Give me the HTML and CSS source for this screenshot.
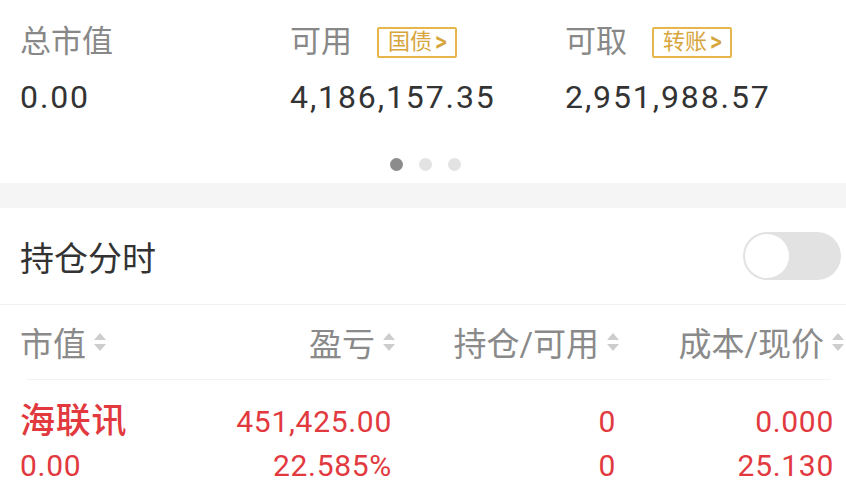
FILE: index.html
```html
<!DOCTYPE html>
<html lang="zh-CN">
<head>
    <meta charset="UTF-8">
    <title>持仓</title>
    <link rel="stylesheet" href="styles.css">
</head>
<body>
    <div class="summary">
        <div class="cell">
            <div class="label">总市值</div>
            <div class="num">0.00</div>
        </div>
        <div class="cell">
            <div class="label">可用 <span class="tag">国债<b>&gt;</b></span></div>
            <div class="num">4,186,157.35</div>
        </div>
        <div class="cell">
            <div class="label">可取 <span class="tag">转账<b>&gt;</b></span></div>
            <div class="num">2,951,988.57</div>
        </div>
    </div>
    <div class="dots">
        <span class="on"></span>
        <span></span>
        <span></span>
    </div>
    <div class="band"></div>
    <div class="switch-row">
        <span class="title">持仓分时</span>
        <span class="toggle"><i></i></span>
    </div>
    <div class="table">
        <div class="head">
            <div class="th left">市值<svg viewBox="0 0 12 20"><polygon points="6,1 12,8 0,8"/><polygon points="0,12 12,12 6,19"/></svg></div>
            <div class="th">盈亏<svg viewBox="0 0 12 20"><polygon points="6,1 12,8 0,8"/><polygon points="0,12 12,12 6,19"/></svg></div>
            <div class="th">持仓/可用<svg viewBox="0 0 12 20"><polygon points="6,1 12,8 0,8"/><polygon points="0,12 12,12 6,19"/></svg></div>
            <div class="th">成本/现价<svg viewBox="0 0 12 20"><polygon points="6,1 12,8 0,8"/><polygon points="0,12 12,12 6,19"/></svg></div>
        </div>
        <div class="line"></div>
        <div class="row">
            <div class="td left name">海联讯</div>
            <div class="td">451,425.00</div>
            <div class="td">0</div>
            <div class="td last">0.000</div>
            <div class="td left">0.00</div>
            <div class="td">22.585%</div>
            <div class="td">0</div>
            <div class="td last">25.130</div>
        </div>
    </div>
</body>
</html>
```

FILE: styles.css
```css
*{
    margin: 0;
    padding: 0;
    box-sizing: border-box;
}
body{
    width: 846px;
    background: #fff;
    font-family: Roboto, "Noto Sans CJK SC", sans-serif;
    color: #333;
    overflow: hidden;
}
.summary{
    display: grid;
    grid-template-columns: 270px 275px 1fr;
    padding: 22px 0 0 20px;
}
.label{
    height: 40px;
    line-height: 40px;
    font-size: 31px;
    color: #888;
    display: flex;
    align-items: center;
}
.tag{
    display: inline-flex;
    align-items: center;
    height: 31px;
    margin-left: 25px;
    padding: 0 7px 0 9px;
    border: 2px solid #e6b64c;
    border-radius: 2px;
    font-size: 22px;
    color: #d6a53c;
}
.tag b{
    font-weight: 500;
    font-size: 27px;
    margin-left: 2px;
    transform: scaleX(0.85);
}
.num{
    margin-top: 15px;
    height: 40px;
    line-height: 40px;
    font-size: 32px;
    color: #333;
    letter-spacing: 1.9px;
}
.dots{
    display: flex;
    justify-content: center;
    gap: 16px;
    margin-top: 41px;
    padding-left: 4px;
}
.dots span{
    width: 13px;
    height: 13px;
    border-radius: 50%;
    background: #e3e3e3;
}
.dots .on{
    background: #8c8c8c;
}
.band{
    height: 25px;
    margin-top: 12px;
    background: #f5f5f5;
}
.switch-row{
    height: 97px;
    display: flex;
    align-items: center;
    justify-content: space-between;
    padding: 0 5px 0 20px;
    border-bottom: 1px solid #f0f0f0;
}
.title{
    font-size: 34px;
    color: #333;
}
.toggle{
    width: 98px;
    height: 48px;
    border-radius: 24px;
    background: #e2e2e2;
    padding: 2px;
    display: flex;
}
.toggle i{
    width: 44px;
    height: 44px;
    border-radius: 50%;
    background: #fff;
}
.head,.row{
    display: grid;
    grid-template-columns: 200px 197px 224px 225px;
}
.head{
    height: 74px;
    align-items: center;
}
.th{
    display: flex;
    align-items: center;
    justify-content: flex-end;
    font-size: 33px;
    color: #8a8a8a;
    padding-right: 2px;
}
.th svg{
    width: 12px;
    height: 20px;
    margin-left: 8px;
    fill: #cdcdcd;
}
.left{
    justify-content: flex-start;
    padding-left: 20px;
}
.line{
    height: 1px;
    margin: 0 15px 0 27px;
    background: #f2f2f2;
}
.row{
    padding-top: 20px;
}
.td{
    height: 44px;
    line-height: 44px;
    font-size: 30px;
    color: #e2393f;
    text-align: right;
    padding-right: 5px;
    letter-spacing: 0.7px;
}
.td.left{
    text-align: left;
}
.td.last{
    padding-right: 12px;
}
.name{
    font-size: 35px;
    font-weight: 500;
}
```
